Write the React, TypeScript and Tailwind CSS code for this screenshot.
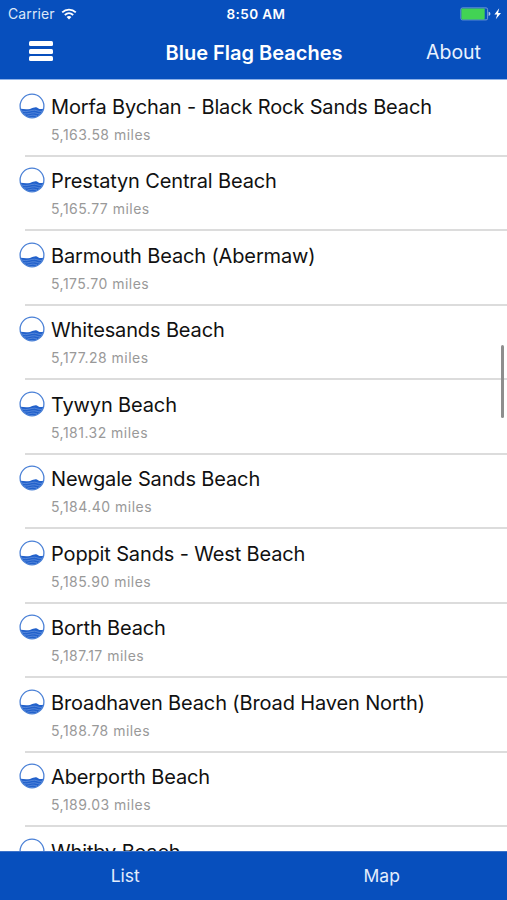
type Beach = {
  name: string;
  distance?: string;
};

const beaches: Beach[] = [
  { name: "Morfa Bychan - Black Rock Sands Beach", distance: "5,163.58 miles" },
  { name: "Prestatyn Central Beach", distance: "5,165.77 miles" },
  { name: "Barmouth Beach (Abermaw)", distance: "5,175.70 miles" },
  { name: "Whitesands Beach", distance: "5,177.28 miles" },
  { name: "Tywyn Beach", distance: "5,181.32 miles" },
  { name: "Newgale Sands Beach", distance: "5,184.40 miles" },
  { name: "Poppit Sands - West Beach", distance: "5,185.90 miles" },
  { name: "Borth Beach", distance: "5,187.17 miles" },
  { name: "Broadhaven Beach (Broad Haven North)", distance: "5,188.78 miles" },
  { name: "Aberporth Beach", distance: "5,189.03 miles" },
  { name: "Whitby Beach" },
];

const WaveIcon = () => (
  <svg viewBox="0 0 26 26" className="h-[26px] w-[26px] shrink-0" fill="none">
    <path
      d="M1.6 15.8C4.5 16.2 8 16.5 11 15.9C13.5 15.3 15.3 14.2 17 14.3C18.4 14.5 19 15.6 20.5 15.9C21.8 16.1 23 16 24.4 15.8C23.2 21 18.9 24.6 13 24.6C7.2 24.6 2.8 21 1.6 15.8Z"
      fill="#2261cb"
    />
    <path
      d="M3 18.2C8 19.6 12 17 15.5 17.2C18 17.4 19.5 18.8 23 18.4M5 20.8C9 21.6 12 19.4 15.5 19.8C18 20 19 21.2 21.3 20.8M8.5 23C11 23 12.5 21.8 15 22.2C16.2 22.4 17 22.9 18 22.8"
      stroke="#86abe6"
      strokeWidth="0.5"
    />
    <circle cx="13" cy="13" r="11.9" stroke="#4a80d6" strokeWidth="1.3" />
  </svg>
);

const WifiIcon = () => (
  <svg viewBox="0 0 16 12" className="h-3 w-4" fill="none" stroke="white" strokeWidth="1.8">
    <path d="M1.2 4.4C5 0.7 11 0.7 14.8 4.4" />
    <path d="M3.8 7C6.3 4.7 9.7 4.7 12.2 7" />
    <path d="M8 11.6L5.6 9C7 7.8 9 7.8 10.4 9Z" fill="white" stroke="none" />
  </svg>
);

const BatteryIcon = () => (
  <svg viewBox="0 0 42 14" className="h-[14px] w-[42px]">
    <rect x="0.9" y="0.9" width="26.7" height="12" rx="1.5" fill="none" stroke="#7c9fda" strokeWidth="0.9" />
    <rect x="1.4" y="1.4" width="23.3" height="11" rx="0.8" fill="#42d354" />
    <path d="M28.6 4.8C31 5.4 31 8.4 28.6 9Z" fill="#b5c9ea" />
    <path d="M39.2 1.2L34.4 7.4H37.2L35.8 12.2L41 5.9H38.1Z" fill="white" />
  </svg>
);

const Header = () => (
  <header className="h-20 shrink-0 border-b border-[#8fb2e8] bg-[#074fbd] text-white">
    <div className="grid h-7 grid-cols-3 items-center pl-2 pr-[5px] text-[14px]">
      <div className="-mt-px flex items-center gap-[6.5px]">
        <span className="tracking-[0.1px] text-[#dce7f8]">Carrier</span>
        <WifiIcon />
      </div>
      <span className="pl-[2px] text-center text-[13.5px] font-semibold tracking-[0.4px]">8:50 AM</span>
      <div className="flex justify-end">
        <BatteryIcon />
      </div>
    </div>
    <div className="grid h-[49px] grid-cols-[1fr_auto_1fr] items-center pl-[28.5px] pr-[26px]">
      <button type="button" aria-label="Menu" className="mb-[3px] flex w-6 flex-col gap-[2.7px]">
        <span className="h-[5px] rounded-[1.5px] bg-white" />
        <span className="h-[5px] rounded-[1.5px] bg-white" />
        <span className="h-[5px] rounded-[1.5px] bg-white" />
      </button>
      <h1 className="pr-[1.5px] text-[20px] font-semibold">Blue Flag Beaches</h1>
      <button type="button" className="pt-px text-right text-[19.5px] text-[#eaf2ff]">
        About
      </button>
    </div>
  </header>
);

const App = () => {
  return (
    <div className="relative flex h-[900px] w-[507px] flex-col overflow-hidden bg-white font-['Inter',sans-serif]">
      <Header />
      <ul className="min-h-0 flex-1 overflow-hidden pt-[2px]">
        {beaches.map((beach) => (
          <li key={beach.name} className="flex h-[74.5px] pl-[18.5px]">
            <div className="-mr-[19.5px] mt-[10.9px]">
              <WaveIcon />
            </div>
            <div className="flex-1 border-b-2 border-[#dcdcdc] pl-[26px]">
              <p className="mt-[9.7px] text-[20px] leading-[30px] tracking-[-0.14px] whitespace-nowrap text-[#111]">
                {beach.name}
              </p>
              {beach.distance && (
                <p className="mt-[3px] text-[14px] leading-5 tracking-[0.48px] text-[#999]">{beach.distance}</p>
              )}
            </div>
          </li>
        ))}
      </ul>
      <nav className="grid h-[49px] shrink-0 grid-cols-2 border-t border-[#3d72c8] bg-[#074fbd] text-[17.5px] text-[#e3edfc]">
        <button type="button" className="pr-[3px]">List</button>
        <button type="button" className="pl-[3px]">Map</button>
      </nav>
      <div className="absolute top-[345px] right-[3.5px] h-[73px] w-[3px] rounded-full bg-[#8e8e8e]" />
    </div>
  );
};

export default App;
